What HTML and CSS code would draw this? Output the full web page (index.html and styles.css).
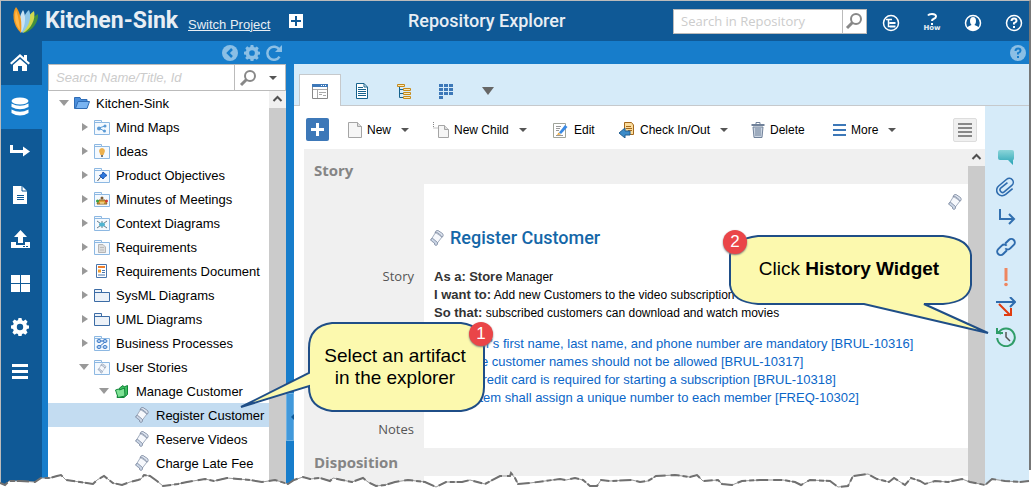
FILE: index.html
```
<!DOCTYPE html>
<html lang="en">
<head>
    <meta charset="utf-8">
    <title>Kitchen-Sink - Repository Explorer</title>
    <link rel="stylesheet" href="styles.css">
</head>
<body>
    <!-- shared icons -->
    <svg class="sprite" aria-hidden="true">
        <symbol id="scroll" viewBox="0 0 16 18">
            <path d="M6.500 3.500 L13 8 L8 14.500 L2.500 10 Z" fill="#f6f8fc" stroke="#a3aebf"/>
            <path d="M6 4 Q6.500 1 9 1.500 L13.500 4.500 Q15 6 13.500 8 Q12 8.500 12 6.500 L9 4 Q7.500 3 6 4 Z" fill="#dfe6f1" stroke="#76839a" stroke-width=".8"/>
            <path d="M2 10 Q3.500 8.500 5 10.500 L8.500 13.500 Q9 16 7 16.500 Q5 16 5.500 14 L2.500 12 Q1 11 2 10 Z" fill="#cbd6e6" stroke="#76839a" stroke-width=".8"/>
        </symbol>
        <symbol id="folder" viewBox="0 0 16 16">
            <path d="M.5 15 V1.500 H7.500 V3.500 H15.500 V15.500 H.5 Z M.5 3.500 H7.500" fill="#f4f9fe" stroke="#8db8e2"/>
        </symbol>
        <symbol id="package" viewBox="0 0 16 14">
            <path d="M.5 5.500 V1.500 H7.500 V4.500 H15.500 V13.500 H.5 V4.500 H8" fill="#edf2f8" stroke="#3c6ca5"/>
        </symbol>
        <symbol id="magnifier" viewBox="0 0 18 18">
            <circle cx="11" cy="7" r="5" fill="none" stroke="#888" stroke-width="2"/>
            <path d="M7.500 10.500 L2 16" stroke="#888" stroke-width="3"/>
        </symbol>
        <symbol id="gear" viewBox="0 0 18 18">
            <path d="M7.500 0 h3 l.5 2.300 1.500.6 2-1.300 2.100 2.100-1.300 2 .6 1.500 2.100.4 v3 l-2.200.5-.5 1.500 1.200 2-2.100 2.100-2-1.300-1.400.6-.5 2.300 h-3 l-.5-2.300-1.500-.6-2 1.300-2.100-2.100 1.300-2-.6-1.500 L0 10.600 v-3 l2.200-.5.5-1.500-1.200-2 L3.600 1.500 l2 1.300 1.400-.6 Z M9 5.800 a3.200 3.200 0 1 0 0 6.400 a3.200 3.200 0 1 0 0-6.400 Z" fill="currentColor" fill-rule="evenodd"/>
        </symbol>
    </svg>

    <div class="app">
        <header class="header">
            <svg class="logo" width="27" height="28" viewBox="0 0 27 28" aria-hidden="true">
                <path d="M12 26 C20 24 27 15 26 7 C18 11 14 18 12 26Z" fill="#44913c"/>
                <path d="M11 26 C19 22 24 12 22 4 C15 9 11 17 11 26Z" fill="#cfd94f"/>
                <path d="M10 26 C17 20 20 10 17 3 C11 8 9 17 10 26Z" fill="#8fc7e8"/>
                <path d="M9 26 C14 18 14 8 11 3 C7 9 6 18 9 26Z" fill="#c9e3f3"/>
                <path d="M9 26 C10 16 9 6 4 0 C0 5 0 18 9 26Z" fill="#f39a1f"/>
                <path d="M8 23 C7 14 6 8 4 3 C2 9 3 18 8 23Z" fill="#ffb84a"/>
            </svg>
            <h1 class="project-name">Kitchen-Sink</h1>
            <a class="switch-project" href="#">Switch Project</a>
            <button class="icon-btn add-project" aria-label="Add">
                <svg width="14" height="14"><path d="M0 0H14V14H0Z" fill="#fff"/><path d="M7 2V12M2 7H12" stroke="#0f5996" stroke-width="2"/></svg>
            </button>
            <div class="page-title">Repository Explorer</div>
            <form class="repo-search">
                <input type="text" aria-label="Search in Repository" placeholder="Search in Repository">
                <button type="button" aria-label="Search"><svg width="18" height="18"><use href="#magnifier"/></svg></button>
            </form>
            <nav class="header-icons">
                <button class="icon-btn" aria-label="Tree">
                    <svg width="18" height="18" fill="none" stroke="#fff"><circle cx="9" cy="9" r="7.500" stroke-width="1.500"/><path d="M4 5.500H10M6.500 6V12.500H8M6.500 9H8" stroke-width="1.500"/><path d="M8 9H13.500M8 12.500H13.500" stroke-width="2"/></svg>
                </button>
                <button class="icon-btn how" aria-label="How">
                    <svg width="12" height="12" fill="none" stroke="#fff" stroke-width="2"><path d="M2 2.500Q3 1 6 1Q10 1 10 3.500Q10 5 7.500 6Q6 6.500 6 8M6 10V12"/></svg>
                    <span>How</span>
                </button>
                <button class="icon-btn" aria-label="User">
                    <svg width="18" height="18"><circle cx="9" cy="9" r="7.500" fill="none" stroke="#fff" stroke-width="1.500"/><ellipse cx="9" cy="7" rx="3" ry="4" fill="#fff"/><path d="M3 14Q4 12 7.500 11V9H10.500V11Q14 12 15 14Q9 19 3 14Z" fill="#fff"/></svg>
                </button>
                <button class="icon-btn" aria-label="Help">
                    <svg width="18" height="18" fill="none" stroke="#fff"><circle cx="9" cy="9" r="7.500" stroke-width="1.500"/><path d="M6.500 7Q6.500 4.500 9 4.500Q11.500 4.500 11.500 6.700Q11.500 8 9 9.200V10.500M9 12V14" stroke-width="2"/></svg>
                </button>
            </nav>
        </header>

        <div class="body">
            <nav class="rail">
                <a href="#" aria-label="Home"><svg width="20" height="18"><path d="M0 9L10 0L14 3.500V1H17V6.500L20 9L18.500 10.500L10 3L1.500 10.500Z" fill="#fff"/><path d="M3 11L10 5L17 11V17H12V12H8V17H3Z" fill="#fff"/></svg></a>
                <a href="#" class="active" aria-label="Repository"><svg width="18" height="20" fill="#fff"><ellipse cx="9" cy="4" rx="8.500" ry="3.500"/><path d="M.5 6.500Q9 11 17.500 6.500V10Q9 14.500 .5 10Z"/><path d="M.5 12.500Q9 17 17.500 12.500V16Q9 21 .5 16Z"/></svg></a>
                <a href="#" aria-label="Share"><svg width="20" height="14"><path d="M1.500 1V7.500H14" fill="none" stroke="#fff" stroke-width="3"/><path d="M13 2.500L20 7.500L13 12.500Z" fill="#fff"/></svg></a>
                <a href="#" aria-label="Document"><svg width="14" height="18"><path d="M0 0H9L14 5V18H0Z" fill="#fff"/><path d="M9 0V5H14M4 9.500H11M4 11.500H11M4 13.500H11" stroke="#0f5996" fill="none"/></svg></a>
                <a href="#" aria-label="Upload"><svg width="19" height="19"><path d="M9.500 0L16 7H12V13H7V7H3Z" fill="#fff"/><path d="M0 12H5V15H14V12H19V18H0Z" fill="#fff"/><path d="M12 16.500H14M15 16.500H17" stroke="#0f5996"/></svg></a>
                <a href="#" aria-label="Dashboard"><svg width="19" height="17" fill="#fff"><path d="M0 0H9V8H0ZM10 0H19V8H10ZM0 9H9V17H0ZM10 9H19V17H10Z"/></svg></a>
                <a href="#" aria-label="Settings"><svg width="18" height="18"><use href="#gear"/></svg></a>
                <a href="#" aria-label="Menu"><svg width="16" height="15" stroke="#fff" stroke-width="3"><path d="M0 1.500H16M0 7.500H16M0 13.500H16"/></svg></a>
            </nav>

            <aside class="explorer">
                <div class="explorer-tools">
                    <button class="icon-btn" aria-label="Collapse"><svg width="16" height="16"><circle cx="8" cy="8" r="8" fill="currentColor"/><path d="M10 4L6 8L10 12" fill="none" stroke="#177dcb" stroke-width="2.500"/></svg></button>
                    <button class="icon-btn" aria-label="Settings"><svg width="16" height="16"><use href="#gear"/></svg></button>
                    <button class="icon-btn" aria-label="Refresh"><svg width="16" height="16" fill="none" stroke="currentColor" stroke-width="2.500"><path d="M13.500 5A6.500 6.500 0 1 0 13.500 11.500"/><path d="M16 0V7H9Z" fill="currentColor" stroke="none"/></svg></button>
                </div>
                <form class="tree-search">
                    <input type="text" aria-label="Search Name/Title, Id" placeholder="Search Name/Title, Id">
                    <button type="button" aria-label="Search"><svg width="18" height="18"><use href="#magnifier"/></svg><i class="caret"></i></button>
                </form>
                <div class="tree-wrap">
                    <ul class="tree">
                        <li class="level0"><i class="twist open"></i><svg width="16" height="16"><path d="M.5 13.500V2.500H6L7 4.500H13V13Z" fill="#4a8edb" stroke="#2f6cb5"/><path d="M1.500 13.500L4 6.500H15.500L13 13.500Z" fill="#79b4f2" stroke="#2f6cb5"/></svg><span>Kitchen-Sink</span></li>
                        <li class="level1"><i class="twist"></i><svg width="16" height="16"><use href="#folder"/><path d="M5 9L11 7M5 9L10 12" stroke="#5a9ad5"/><circle cx="5" cy="9.500" r="2" fill="#5a9ad5"/><circle cx="11" cy="7" r="1.500" fill="#5a9ad5"/><circle cx="10.500" cy="12" r="1.500" fill="#5a9ad5"/></svg><span>Mind Maps</span></li>
                        <li class="level1"><i class="twist"></i><svg width="16" height="16"><use href="#folder"/><path d="M8 5A3 3 0 0 1 10.500 9.500L9.500 12H6.500L5.500 9.500A3 3 0 0 1 8 5Z" fill="#edb04d"/><path d="M7 13H9" stroke="#777" stroke-width="2"/></svg><span>Ideas</span></li>
                        <li class="level1"><i class="twist"></i><svg width="16" height="16"><use href="#folder"/><path d="M7 9.500L3.500 14" stroke="#555"/><path d="M9 5L13 8.500L11 9.500L9 12L5.500 8.500L8 7.500Z" fill="#2c78de" stroke="#1c56b1"/></svg><span>Product Objectives</span></li>
                        <li class="level1"><i class="twist"></i><svg width="16" height="16"><use href="#folder"/><path d="M3 13L5 9H11L13 13Z" fill="#e0a43a" stroke="#8d6420"/><circle cx="8" cy="7" r="1.500" fill="#7c5c36"/><circle cx="3.500" cy="10" r="1.500" fill="#3ba243"/><circle cx="12.500" cy="10" r="1.500" fill="#d23e34"/><path d="M6 12H10" stroke="#fff6c2"/></svg><span>Minutes of Meetings</span></li>
                        <li class="level1"><i class="twist"></i><svg width="16" height="16"><use href="#folder"/><path d="M3 6L13 13M13 6L3 13M8 6V13" stroke="#6b7c86"/><ellipse cx="8" cy="9.500" rx="3" ry="2" fill="#50b4d0"/></svg><span>Context Diagrams</span></li>
                        <li class="level1"><i class="twist"></i><svg width="16" height="16"><use href="#folder"/><path d="M4.500 5.500H9L11.500 8V13.500H4.500Z" fill="#ddd" stroke="#b5b5b5"/><path d="M6 8.500H10M6 11H10" stroke="#bbb"/></svg><span>Requirements</span></li>
                        <li class="level1"><i class="twist"></i><svg width="16" height="16"><path d="M2.500 1.500H12.500V14.500H2.500Z" fill="#fff" stroke="#4a76ad"/><path d="M4 4H11" stroke="#ef7f2c" stroke-width="2"/><path d="M4 8H7" stroke="#ef9a2c" stroke-width="3"/><path d="M8 7.500H11M8 9.500H11M4 12H11" stroke="#4a76ad"/></svg><span>Requirements Document</span></li>
                        <li class="level1"><i class="twist"></i><svg width="16" height="14"><use href="#package"/></svg><span>SysML Diagrams</span></li>
                        <li class="level1"><i class="twist"></i><svg width="16" height="14"><use href="#package"/></svg><span>UML Diagrams</span></li>
                        <li class="level1"><i class="twist"></i><svg width="16" height="16"><use href="#folder"/><g fill="#b6d3f5" stroke="#3a78c6"><path d="M6 6H10M5 12L11 7"/><ellipse cx="5" cy="6" rx="2" ry="1.500"/><ellipse cx="11" cy="6" rx="2" ry="1.500"/><ellipse cx="5" cy="12" rx="2" ry="1.500"/><ellipse cx="11" cy="12" rx="2" ry="1.500"/></g></svg><span>Business Processes</span></li>
                        <li class="level1"><i class="twist open"></i><svg width="16" height="16"><use href="#folder"/><use href="#scroll" x="3" y="4" width="10" height="11"/></svg><span>User Stories</span></li>
                        <li class="level2"><i class="twist open"></i><svg width="16" height="16"><path d="M5.500 5L9 2.500L10 4L13.500 2.500V11.500L10 14.500H3Z" fill="#3fbf60" stroke="#12873a"/><path d="M1.500 7L4.500 6L5.500 7L10.500 5L11 13L4 14.500Z" fill="#7fe295" stroke="#12873a"/></svg><span>Manage Customer</span></li>
                        <li class="level3 selected"><i class="twist none"></i><svg width="16" height="18"><use href="#scroll"/></svg><span>Register Customer</span></li>
                        <li class="level3"><i class="twist none"></i><svg width="16" height="18"><use href="#scroll"/></svg><span>Reserve Videos</span></li>
                        <li class="level3"><i class="twist none"></i><svg width="16" height="18"><use href="#scroll"/></svg><span>Charge Late Fee</span></li>
                    </ul>
                    <div class="scrollbar"><svg width="17" height="16"><path d="M4.500 10L8.500 6L12.500 10" fill="none" stroke="#505050" stroke-width="2"/></svg></div>
                </div>
            </aside>

            <div class="splitter"><button aria-label="Collapse explorer"></button></div>

            <main class="content">
                <div class="content-bar">
                    <button class="icon-btn" aria-label="Page help"><svg width="16" height="16"><circle cx="8" cy="8" r="8" fill="currentColor"/><path d="M5.500 6Q5.500 3.500 8 3.500Q10.500 3.500 10.500 5.700Q10.500 7 8 8.200V9.500M8 11V13" fill="none" stroke="#177dcb" stroke-width="2"/></svg></button>
                </div>
                <div class="tabs">
                    <button class="tab active" aria-label="Form"><svg width="16" height="15"><path d="M.5.5H15.500V14.500H.5Z" fill="#fff" stroke="#888"/><path d="M0 1.500H16" stroke="#3d78b8" stroke-width="3"/><path d="M9 1.500H10M11 1.500H12M13 1.500H14" stroke="#fff"/><path d="M5.500 5V14M1 5.500H15M7 8.500H14M7 10.500H10M11 11.500H14" stroke="#aaa"/></svg></button>
                    <button class="tab" aria-label="Document"><svg width="12" height="16"><path d="M.5.500H8L11.500 4V15.500H.5Z" fill="#fff" stroke="#17628c"/><path d="M8 .5V4H11M2 4.500H7M2 6.500H10M2 8.500H10M2 10.500H10M2 12.500H10" fill="none" stroke="#17628c"/></svg></button>
                    <button class="tab" aria-label="Tree"><svg width="15" height="15" fill="#fde7b3" stroke="#c48a1c"><path d="M2.500 3V13.500H6M2.500 5.500H6M2.500 9.500H6" fill="none" stroke="#17628c"/><path d="M.5.5H7.500V2.500H.5ZM6.500 4.500H13.500V6.500H6.500ZM6.500 8.500H13.500V10.500H6.500ZM6.500 12.500H13.500V14.500H6.500Z"/></svg></button>
                    <button class="tab" aria-label="Board"><svg width="15" height="15" fill="#3d78b8"><path d="M0 0H4V3H0ZM5 0H9V3H5ZM10 0H14V3H10ZM0 4H4V7H0ZM5 4H9V7H5ZM10 4H14V7H10ZM0 8H4V11H0ZM5 8H9V11H5ZM10 8H14V11H10ZM0 12H4V15H0Z"/></svg></button>
                    <button class="tab" aria-label="More views"><svg width="12" height="8"><path d="M0 0H12L6 8Z" fill="#666"/></svg></button>
                </div>

                <div class="workspace">
                    <section class="artifact">
                        <div class="toolbar">
                            <button class="add-btn" aria-label="Add"><svg width="13" height="13"><path d="M6.500 0V13M0 6.500H13" stroke="#fff" stroke-width="3"/></svg></button>
                            <button class="tool new"><svg width="14" height="16"><path d="M.5.500H9.500L13.500 4.500V15.500H.5Z" fill="#f6f6f6" stroke="#a5a5a5"/><path d="M9.500 .5V4.500H13.500" fill="#ddd" stroke="#a5a5a5"/></svg><span>New</span><i class="caret"></i></button>
                            <button class="tool child"><svg width="16" height="16"><path d="M.5 0V6H5" fill="none" stroke="#888" stroke-dasharray="1 1"/><path d="M5.500 3.500H11.500L15.500 7.500V15.500H5.500Z" fill="#f6f6f6" stroke="#a5a5a5"/><path d="M11.500 3.500V7.500H15.500" fill="#ddd" stroke="#a5a5a5"/></svg><span>New Child</span><i class="caret"></i></button>
                            <button class="tool edit"><svg width="16" height="16"><path d="M.5 1.500H12.500V15.500H.5Z" fill="#fff" stroke="#a0a49a"/><path d="M3 4.500H8M3 6.500H7M3 8.500H6M3 13.500H10" stroke="#999"/><path d="M6 10.500L12 3L14.500 5L8 12Z" fill="#3a8ae4"/><path d="M4 13L5.500 10.500L8 12.500Z" fill="#eda83a"/></svg><span>Edit</span></button>
                            <button class="tool check"><svg width="16" height="16"><path d="M5.500.500H12.500L14.500 3V12.500H5.500Z" fill="#fbdc9c" stroke="#a4681c"/><path d="M7 4.500H12M7 6.500H13M9 8.500H13" stroke="#a4681c"/><path d="M0 11L6 6V9H11V13H6V16Z" fill="#3c8bc8" stroke="#235f91"/></svg><span>Check In/Out</span><i class="caret"></i></button>
                            <button class="tool delete"><svg width="14" height="16" stroke="#71829a"><path d="M5 2V.5H9V2" fill="none"/><path d="M.5 3H13.500" stroke-width="2"/><path d="M2 5L3 15.500H11L12 5Z" fill="#cbd5e2"/><path d="M5 6V14M7 6V14M9 6V14"/></svg><span>Delete</span></button>
                            <button class="tool more"><svg width="13" height="12" stroke="#3d78b8" stroke-width="2"><path d="M0 1H13M0 6H13M0 11H13"/></svg><span>More</span><i class="caret"></i></button>
                            <button class="list-btn" aria-label="List"><svg width="14" height="14" stroke="#888" stroke-width="2"><path d="M0 1H14M0 5H14M0 9H14M0 13H14"/></svg></button>
                        </div>
                        <div class="form-wrap">
                            <div class="form">
                                <h2 class="group">Story</h2>
                                <div class="fields">
                                    <div class="label story-label">Story</div>
                                    <div class="value">
                                        <svg class="corner" width="16" height="18"><use href="#scroll"/></svg>
                                        <h3 class="artifact-title"><svg width="16" height="18"><use href="#scroll"/></svg>Register Customer</h3>
                                        <div class="story">
                                            <p><b>As a:</b> <b>Store</b> Manager</p>
                                            <p><b>I want to:</b> Add new Customers to the video subscription list</p>
                                            <p><b>So that:</b> subscribed customers can download and watch movies</p>
                                        </div>
                                        <ul class="rules">
                                            <li><a href="#">Customer's first name, last name, and phone number are mandatory [BRUL-10316]</a></li>
                                            <li><a href="#">Duplicate customer names should not be allowed [BRUL-10317]</a></li>
                                            <li><a href="#">A valid credit card is required for starting a subscription [BRUL-10318]</a></li>
                                            <li><a href="#">The system shall assign a unique number to each member [FREQ-10302]</a></li>
                                        </ul>
                                    </div>
                                    <div class="label">Notes</div>
                                    <div class="value"></div>
                                </div>
                                <h2 class="group">Disposition</h2>
                                <div class="fields"><div class="label"></div><div class="value"></div></div>
                            </div>
                            <div class="scrollbar"><svg width="17" height="16"><path d="M4.500 10L8.500 6L12.500 10" fill="none" stroke="#505050" stroke-width="2"/></svg></div>
                        </div>
                    </section>

                    <nav class="widgets">
                        <button class="icon-btn" aria-label="Comments"><svg width="20" height="20"><defs><linearGradient id="teal" x2="0" y2="1"><stop stop-color="#8bd5d9"/><stop offset="1" stop-color="#27a3b4"/></linearGradient></defs><path d="M4 3H16Q18 3 18 5V11Q18 13 17 13L17 18L12 13H4Q2 13 2 11V5Q2 3 4 3Z" fill="url(#teal)"/></svg></button>
                        <button class="icon-btn" aria-label="Attachments"><svg width="20" height="20"><g transform="rotate(50 10 10)" fill="none" stroke="#2f6cae" stroke-width="1.600"><path d="M7.500 6V14.500A2.500 2.500 0 0 0 12.500 14.500V4.500A4 4 0 0 0 4.500 4.500V15A5.500 5.500 0 0 0 15.500 15V6"/></g></svg></button>
                        <button class="icon-btn" aria-label="Downstream"><svg width="20" height="20" fill="none" stroke="#3270b0" stroke-width="2"><path d="M4 2V12H18M13 7L18 12L13 17"/></svg></button>
                        <button class="icon-btn" aria-label="Links"><svg width="20" height="20"><g transform="rotate(-45 10 10)" fill="none" stroke="#2f6cae" stroke-width="2"><path d="M8 13H3A3.500 3.500 0 0 1 3 6H8A3.500 3.500 0 0 1 11.500 9.500M12 7H17A3.500 3.500 0 0 1 17 14H12A3.500 3.500 0 0 1 8.500 10.500"/></g></svg></button>
                        <button class="icon-btn" aria-label="Issues"><svg width="20" height="20" fill="#ee8660"><path d="M8.500 1H11.500V14H8.500Z"/><circle cx="10" cy="17.500" r="1.800"/></svg></button>
                        <button class="icon-btn" aria-label="Impact"><svg width="20" height="20" fill="none" stroke-width="2"><path d="M3 7L14 18M15 11V18H8" stroke="#e03c10"/><path d="M0 5H18M14 0L19 5L14 10" stroke="#2f6cae"/></svg></button>
                        <button class="icon-btn" aria-label="History"><svg width="20" height="20" fill="none" stroke="#2f9d68" stroke-width="2"><path d="M3 5A8.800 8.800 0 1 1 1.200 11M1 1V6H7M1 4L5 7"/><path d="M10 5V10L14 14" stroke="#555" stroke-width="1.500"/></svg></button>
                    </nav>
                </div>
            </main>
        </div>
    </div>

    <!-- torn paper along the bottom -->
    <svg class="torn" viewBox="0 0 1034 24" preserveAspectRatio="none" aria-hidden="true">
        <defs>
            <path id="edge" d="M0 13L5 15L9 11L20 11L35 12L41 8L50 8L57 6L61 5L66 10L80 12L93 14L97 10L104 6L113 13L122 15L130 12L138 10L141 9L144 5L150 6L157 11L163 16L178 14L187 12L205 9L214 11L227 8L238 9L250 10L262 12L275 10L288 14L294 10L303 7L310 9L320 8L330 11L333 8L342 10L352 12L363 8L368 12L376 16L385 15L395 12L408 10L425 12L436 17L446 12L462 12L470 10L485 14L500 6L510 6L511 3L515 8L518 14L530 13L545 11L560 9L566 10L575 8L583 10L590 16L597 16L601 10L610 11L632 10L640 12L648 11L656 6L675 5L690 7L697 5L703 11L718 10L722 14L732 15L742 11L760 10L783 10L795 12L801 15L810 10L830 11L838 17L848 16L853 6L868 4L877 9L889 12L894 8L905 15L911 8L920 11L925 14L935 11L948 12L962 9L970 12L985 15L992 9L1005 11L1020 12L1029 11"/>
        </defs>
        <path d="M0 13L5 15L9 11L20 11L35 12L41 8L50 8L57 6L61 5L66 10L80 12L93 14L97 10L104 6L113 13L122 15L130 12L138 10L141 9L144 5L150 6L157 11L163 16L178 14L187 12L205 9L214 11L227 8L238 9L250 10L262 12L275 10L288 14L294 10L303 7L310 9L320 8L330 11L333 8L342 10L352 12L363 8L368 12L376 16L385 15L395 12L408 10L425 12L436 17L446 12L462 12L470 10L485 14L500 6L510 6L511 3L515 8L518 14L530 13L545 11L560 9L566 10L575 8L583 10L590 16L597 16L601 10L610 11L632 10L640 12L648 11L656 6L675 5L690 7L697 5L703 11L718 10L722 14L732 15L742 11L760 10L783 10L795 12L801 15L810 10L830 11L838 17L848 16L853 6L868 4L877 9L889 12L894 8L905 15L911 8L920 11L925 14L935 11L948 12L962 9L970 12L985 15L992 9L1005 11L1020 12L1029 11V0H1034V24H0Z" fill="#fff"/>
        <use href="#edge" class="tear-line"/>
        <use href="#edge" class="tear-shade"/>
    </svg>

    <!-- step callouts -->
    <div class="callout step1">
        <svg width="246" height="92" aria-hidden="true"><path d="M92 1H221Q244 4 244 26V65Q244 86 221 89H92Q69 86 69 65V64L1 85L69 51V26Q69 4 92 1Z"/></svg>
        <p>Select an artifact<br>in the explorer</p>
        <span class="badge">1</span>
    </div>
    <div class="callout step2">
        <svg width="262" height="100" aria-hidden="true"><path d="M29 1H214Q240 4 242 20V50Q240 67 214 69H195L259 98L135 69H29Q3 67 1 50V20Q3 4 29 1Z"/></svg>
        <p>Click <b>History Widget</b></p>
        <span class="badge">2</span>
    </div>
</body>
</html>
```

FILE: styles.css
```
* {
    box-sizing: border-box;
}
body {
    margin: 0;
    height: 100vh;
    overflow: hidden;
    position: relative;
    background: #fff;
    font-family: "Liberation Sans", Arial, sans-serif;
    font-size: 13px;
    color: #000;
}
h1, h2, h3, p, ul {
    margin: 0;
    padding: 0;
    list-style: none;
}
button, input {
    font-family: inherit;
    margin: 0;
}
svg {
    display: block;
    flex: none;
}
.sprite {
    position: absolute;
    width: 0;
    height: 0;
}
.icon-btn {
    display: flex;
    padding: 0;
    border: 0;
    background: none;
    color: inherit;
    cursor: pointer;
}
.caret {
    border: 4px solid transparent;
    border-top-color: #555;
    border-bottom: 0;
}

.app {
    height: 100vh;
    margin-right: 3px;
    display: flex;
    flex-direction: column;
    border: 1px solid #bbb;
    border-right: 2px solid #777;
    border-bottom: 0;
}

/* header */
.header {
    display: flex;
    align-items: center;
    height: 40px;
    flex: none;
    padding: 0 6px 0 11px;
    background: #0f5996;
    color: #e8eef4;
}
.project-name {
    margin-left: 6px;
    width: 137px;
    font: bold 23px/30px Roboto, sans-serif;
    white-space: nowrap;
}
.switch-project {
    margin: 6px 0 0 6px;
    width: 84px;
    font-size: 13px;
    color: #e8eef4;
    white-space: nowrap;
}
.add-project {
    margin-left: 17px;
}
.page-title {
    flex: 1;
    padding-left: 105px;
    font: 500 18px/22px Roboto, sans-serif;
}
.repo-search {
    display: flex;
    width: 194px;
    height: 25px;
    background: #fff;
    border: 1px solid #bbb;
}
.repo-search input {
    flex: 1;
    min-width: 0;
    border: 0;
    padding: 0 7px;
    font: 13px "Open Sans", sans-serif;
}
.repo-search button {
    width: 24px;
    padding: 0 2px;
    border: 0;
    border-left: 1px solid #bbb;
    background: #fff;
}
input::placeholder {
    color: #ccc;
    opacity: 1;
}
.header-icons {
    display: flex;
    align-items: center;
    gap: 23px;
    margin: 3px 0 0 15px;
}
.how {
    flex-direction: column;
    align-items: center;
    width: 18px;
    font: bold 7px/7px "DejaVu Sans", sans-serif;
}

/* left navigation */
.body {
    display: flex;
    flex: 1;
    min-height: 0;
    background: #177dcb;
}
.rail {
    width: 41px;
    flex: none;
    background: #0f5996;
}
.rail a {
    display: flex;
    align-items: center;
    justify-content: center;
    height: 44px;
    padding-right: 3px;
    color: #fff;
}
.rail a.active {
    background: #177dcb;
}

/* explorer */
.explorer {
    display: flex;
    flex-direction: column;
    width: 244px;
    flex: none;
    padding-left: 6px;
}
.explorer-tools {
    display: flex;
    align-items: center;
    justify-content: flex-end;
    gap: 6px;
    height: 23px;
    flex: none;
    padding-right: 4px;
    color: #8bbfe5;
}
.tree-search {
    display: flex;
    height: 27px;
    flex: none;
    background: #fff;
    border: 1px solid #bbb;
}
.tree-search input {
    flex: 1;
    min-width: 0;
    border: 0;
    padding: 0 7px;
    font-size: 13px;
    font-style: italic;
}
.tree-search button {
    display: flex;
    align-items: center;
    gap: 12px;
    width: 51px;
    padding: 0 4px;
    border: 0;
    border-left: 1px solid #bbb;
    background: #fff;
}
.tree-wrap {
    display: flex;
    flex: 1;
    min-height: 0;
    background: #fff;
}
.tree {
    flex: 1;
    overflow: hidden;
}
.tree li {
    display: flex;
    align-items: center;
    height: 24px;
    white-space: nowrap;
}
.tree svg {
    margin-right: 6px;
}
.tree .selected {
    background: #c3dcf1;
}
.level0 { padding-left: 8px; }
.level1 { padding-left: 28px; }
.level2 { padding-left: 48px; }
.level3 { padding-left: 68px; }
.twist {
    width: 6px;
    margin: 0 6px;
    border: 4px solid transparent;
    border-left: 6px solid #999;
    border-right: 0;
}
.twist.open {
    width: 10px;
    margin: 0 5px 0 3px;
    border: 5px solid transparent;
    border-top: 6px solid #999;
    border-bottom: 0;
}
.twist.none {
    border-color: transparent;
}
.scrollbar {
    width: 17px;
    flex: none;
    background: linear-gradient(#f0f0f0 17px, #cbcbcb 17px);
}
.splitter {
    display: flex;
    width: 8px;
    flex: none;
    padding-top: 352px;
}
.splitter button {
    width: 8px;
    height: 48px;
    padding: 0;
    border: 1px solid #6fb2e3;
    background: #4299db;
}
.splitter button::before {
    content: "";
    display: block;
    width: 4px;
    border: 4px solid transparent;
    border-right-color: #0f5996;
    border-left: 0;
}

/* content */
.content {
    display: flex;
    flex-direction: column;
    flex: 1;
    min-width: 0;
}
.content-bar {
    display: flex;
    align-items: center;
    justify-content: flex-end;
    height: 23px;
    flex: none;
    padding-right: 3px;
    color: #8bbfe5;
}
.tabs {
    display: flex;
    height: 42px;
    flex: none;
    padding: 10px 0 0 5px;
    background: #d6ebf9;
    box-shadow: inset 0 -1px #c6c9cc;
}
.tab {
    display: flex;
    align-items: center;
    justify-content: center;
    width: 42px;
    padding: 2px 0 0;
    border: 0;
    background: none;
}
.tab.active {
    border: 1px solid #c6c9cc;
    border-bottom: 0;
    background: #fff;
}
.workspace {
    display: flex;
    flex: 1;
    min-height: 0;
}
.artifact {
    display: flex;
    flex-direction: column;
    flex: 1;
    min-width: 0;
    padding-left: 10px;
    background: #fff;
}
.toolbar {
    display: flex;
    align-items: center;
    height: 43px;
    flex: none;
    padding: 4px 8px 0 2px;
}
.add-btn {
    display: flex;
    align-items: center;
    justify-content: center;
    width: 23px;
    height: 23px;
    padding: 0;
    border: 0;
    border-radius: 2px;
    background: #3d78b8;
}
.tool {
    display: flex;
    align-items: center;
    gap: 5px;
    padding: 0;
    border: 0;
    background: none;
    font-size: 12px;
    white-space: nowrap;
}
.tool .caret {
    margin-left: 5px;
}
.new { margin-left: 19px; width: 85px; }
.child { width: 120px; }
.edit { width: 66px; }
.check { width: 132px; }
.delete { width: 82px; }
.list-btn {
    display: flex;
    align-items: center;
    justify-content: center;
    width: 24px;
    height: 24px;
    margin-left: auto;
    padding: 0;
    border: 1px solid #ddd;
    border-radius: 2px;
    background: #f0f0f0;
}
.form-wrap {
    display: flex;
    flex: 1;
    min-height: 0;
}
.form {
    display: flex;
    flex-direction: column;
    flex: 1;
    min-width: 0;
    overflow: hidden;
    background: #f0f0f0;
}
.group {
    padding: 11px 10px 4px;
    font: bold 15px/20px "Open Sans", sans-serif;
    color: #858585;
}
.group + .fields:last-child {
    flex: 1;
}
.group:nth-of-type(2) {
    padding: 4px 10px;
}
.fields {
    display: grid;
    grid-template-columns: 120px 1fr;
}
.label {
    padding: 2px 10px 0 0;
    text-align: right;
    font: 13px/18px "Open Sans", sans-serif;
    color: #555;
}
.story-label {
    padding-top: 83px;
}
.value {
    min-height: 30px;
    background: #fff;
}
.corner {
    margin: 9px 5px 0 auto;
}
.artifact-title {
    display: flex;
    align-items: center;
    gap: 5px;
    margin-top: 15px;
    padding-left: 5px;
    font: 500 18px/24px Roboto, sans-serif;
    color: #1467a8;
}
.story {
    margin-top: 18px;
    padding-left: 10px;
    font-size: 12px;
    line-height: 18px;
    white-space: nowrap;
}
.story b {
    font-size: 13px;
    color: #333;
}
.rules {
    padding: 13px 0 11px 10px;
    font-size: 13px;
    line-height: 18px;
    white-space: nowrap;
}
.rules a {
    color: #0a66c8;
    text-decoration: none;
}
.widgets {
    display: flex;
    flex-direction: column;
    align-items: center;
    gap: 10px;
    width: 44px;
    flex: none;
    padding: 41px 2px 0 0;
    background: #d6ebf9;
}

/* torn edge */
.torn {
    position: absolute;
    left: 0;
    bottom: 0;
    width: 100%;
    height: 24px;
}
.tear-line {
    fill: none;
    stroke: #999;
    stroke-width: 1;
}
.tear-shade {
    fill: none;
    stroke: #707070;
    stroke-width: 2;
    stroke-dasharray: 9 3 5 2 12 5;
}

/* callouts */
.callout {
    position: absolute;
}
.callout path {
    fill: #fcf9ae;
    stroke: #1f4e87;
    stroke-width: 2;
}
.callout p {
    position: absolute;
    text-align: center;
    font-size: 19px;
    line-height: 22px;
    white-space: nowrap;
}
.badge {
    position: absolute;
    width: 24px;
    height: 24px;
    border-radius: 50%;
    background: #ea4548;
    box-shadow: 0 1px 2px #777;
    color: #fff;
    font-size: 17px;
    line-height: 24px;
    text-align: center;
}
.step1 {
    left: 240px;
    top: 322px;
}
.step1 p {
    left: 69px;
    right: 5px;
    top: 23px;
}
.step1 .badge {
    right: -7px;
    top: 0;
}
.step2 {
    left: 729px;
    top: 235px;
}
.step2 p {
    left: 0;
    right: 22px;
    top: 23px;
}
.step2 .badge {
    left: -6px;
    top: -5px;
}
```
